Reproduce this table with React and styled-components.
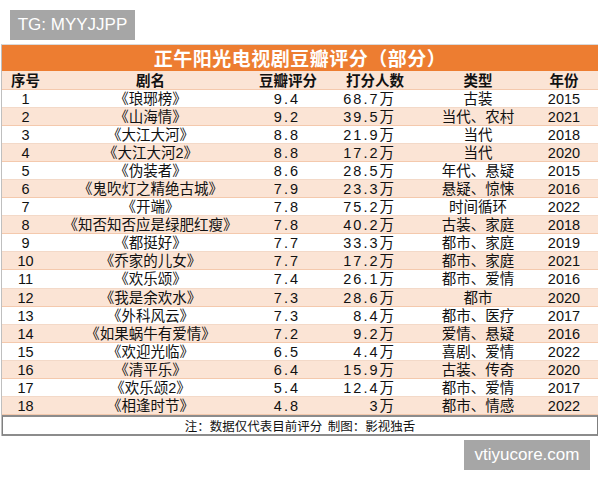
import React from 'react'
import styled, { createGlobalStyle } from 'styled-components'

const GlobalStyle = createGlobalStyle`
    html, body {
        margin: 0;
        padding: 0;
        background: #fff;
    }
    body {
        width: 600px;
        height: 480px;
        overflow: hidden;
        font-family: "Liberation Sans", "Noto Sans CJK SC", sans-serif;
    }
`

const Page = styled.div`
    position: relative;
    width: 600px;
    height: 480px;
    padding-top: 44px;
    box-sizing: border-box;
`

const Tag = styled.div`
    position: absolute;
    left: ${p => p.left}px;
    top: ${p => p.top}px;
    background: #a6a6a6;
    color: #fff;
    font-family: "Liberation Sans", sans-serif;
    font-size: 17px;
    height: 30px;
    line-height: 30px;
    width: ${p => p.width}px;
    white-space: nowrap;
    text-align: center;
`

const Sheet = styled.div`
    margin-left: 1px;
    width: 597px;
    border-top: 1px solid #d9d9d9;
    border-left: 1px solid #bfbfbf;
    box-sizing: border-box;
`

const Title = styled.div`
    height: 26px;
    background: #ed7d31;
    color: #fff;
    font-family: "Noto Sans CJK SC", sans-serif;
    font-weight: bold;
    font-size: 19px;
    line-height: 26px;
    text-align: center;
    letter-spacing: 0.5px;
`

const Row = styled.div`
    display: grid;
    grid-template-columns: 47px 203px 72px 102px 104px 1fr;
    height: ${p => p.h}px;
    align-items: center;
    background: ${p => (p.shade ? '#fbe4d5' : '#fff')};
    border-bottom: 1px solid ${p => (p.shade ? '#f4c9ad' : '#f3d9c8')};
    box-sizing: border-box;
    font-size: 14.5px;
    color: #111;
`

const HeadCell = styled.div`
    text-align: center;
    font-family: "Noto Sans CJK SC", sans-serif;
    font-weight: bold;
    font-size: 14.5px;
    line-height: 18px;
`

const Cell = styled.div`
    text-align: ${p => p.align || 'center'};
    padding-right: ${p => p.pr || 0}px;
    font-family: "Liberation Sans", "Noto Sans CJK SC", sans-serif;
    line-height: 18px;
    white-space: nowrap;
    letter-spacing: ${p => (p.spaced ? '2px' : '0')};
`

const Footer = styled.div`
    height: 17px;
    border: 1px solid #7f7f7f;
    border-bottom: 2px solid #8c8c8c;
    border-top: 2px solid #8c8c8c;
    text-align: center;
    font-family: "Noto Sans CJK SC", sans-serif;
    font-size: 12.5px;
    line-height: 17px;
    color: #111;
`

const dramas = [
    [1, '《琅琊榜》', '9.4', '68.7万', '古装', 2015],
    [2, '《山海情》', '9.2', '39.5万', '当代、农村', 2021],
    [3, '《大江大河》', '8.8', '21.9万', '当代', 2018],
    [4, '《大江大河2》', '8.8', '17.2万', '当代', 2020],
    [5, '《伪装者》', '8.6', '28.5万', '年代、悬疑', 2015],
    [6, '《鬼吹灯之精绝古城》', '7.9', '23.3万', '悬疑、惊悚', 2016],
    [7, '《开端》', '7.8', '75.2万', '时间循环', 2022],
    [8, '《知否知否应是绿肥红瘦》', '7.8', '40.2万', '古装、家庭', 2018],
    [9, '《都挺好》', '7.7', '33.3万', '都市、家庭', 2019],
    [10, '《乔家的儿女》', '7.7', '17.2万', '都市、家庭', 2021],
    [11, '《欢乐颂》', '7.4', '26.1万', '都市、爱情', 2016],
    [12, '《我是余欢水》', '7.3', '28.6万', '都市', 2020],
    [13, '《外科风云》', '7.3', '8.4万', '都市、医疗', 2017],
    [14, '《如果蜗牛有爱情》', '7.2', '9.2万', '爱情、悬疑', 2016],
    [15, '《欢迎光临》', '6.5', '4.4万', '喜剧、爱情', 2022],
    [16, '《清平乐》', '6.4', '15.9万', '古装、传奇', 2020],
    [17, '《欢乐颂2》', '5.4', '12.4万', '都市、爱情', 2017],
    [18, '《相逢时节》', '4.8', '3万', '都市、情感', 2022],
]

const heads = ['序号', '剧名', '豆瓣评分', '打分人数', '类型', '年份']

const App = () => {
    return (
        <>
            <GlobalStyle />
            <Page>
                <Tag left={10} top={10} width={125}>TG: MYYJJPP</Tag>
                <Sheet>
                    <Title>正午阳光电视剧豆瓣评分（部分）</Title>
                    <Row shade h={18.5}>
                        {heads.map(h => <HeadCell key={h}>{h}</HeadCell>)}
                    </Row>
                    {dramas.map((d, i) => (
                        <Row key={d[0]} shade={i % 2 === 1} h={18.1}>
                            <Cell>{d[0]}</Cell>
                            <Cell>{d[1]}</Cell>
                            <Cell align="right" pr={24} spaced>{d[2]}</Cell>
                            <Cell align="right" pr={30} spaced>{d[3]}</Cell>
                            <Cell>{d[4]}</Cell>
                            <Cell>{d[5]}</Cell>
                        </Row>
                    ))}
                    <Footer>注：数据仅代表目前评分&nbsp;&nbsp;制图：影视独舌</Footer>
                </Sheet>
                <Tag left={464} top={440} width={126}>vtiyucore.com</Tag>
            </Page>
        </>
    )
}

export default App
